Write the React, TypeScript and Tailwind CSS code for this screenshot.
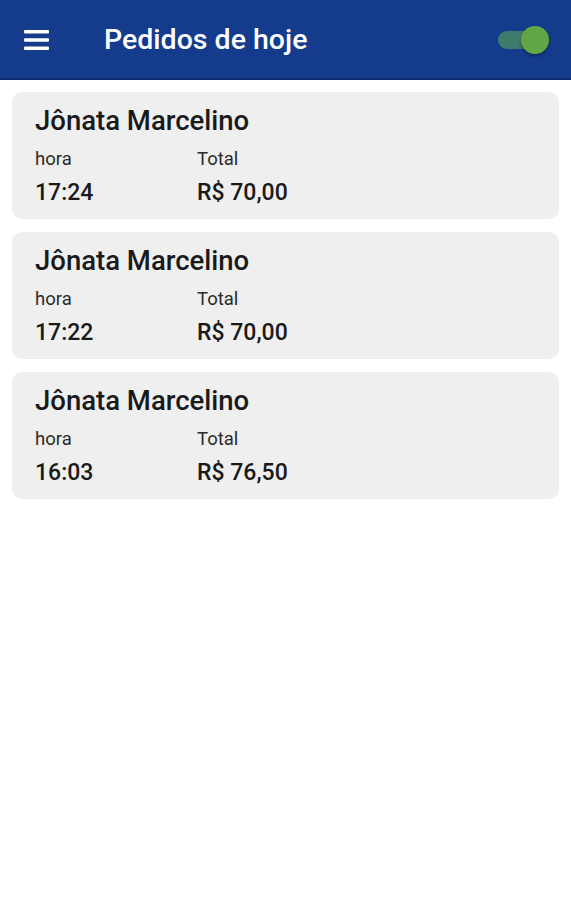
const orders = [
  { name: 'Jônata Marcelino', hora: '17:24', total: 'R$ 70,00' },
  { name: 'Jônata Marcelino', hora: '17:22', total: 'R$ 70,00' },
  { name: 'Jônata Marcelino', hora: '16:03', total: 'R$ 76,50' },
]

function OrderCard({ name, hora, total }: { name: string; hora: string; total: string }) {
  return (
    <div className="h-[127px] rounded-[10px] bg-[#efefef] pl-[23px] pt-[13px] text-[#1a1a1a]">
      <div className="text-[27.5px] font-medium leading-[32px]">{name}</div>
      <div className="mt-[10px] flex">
        <div className="w-[162px]">
          <div className="text-[18.5px] leading-[24px] text-[#2a2a2a]">hora</div>
          <div className="mt-[8px] text-[23px] font-medium leading-[28px]">{hora}</div>
        </div>
        <div>
          <div className="text-[18.5px] leading-[24px] text-[#2a2a2a]">Total</div>
          <div className="mt-[8px] text-[23px] font-medium leading-[28px]">{total}</div>
        </div>
      </div>
    </div>
  )
}

export default function App() {
  return (
    <div className="min-h-[900px] w-[571px] bg-white font-['Roboto',sans-serif]">
      <header className="flex h-[80px] items-center border-b-2 border-[#0d2c78] bg-[#153b8d] pl-[24px] pr-[33px] pt-[2px]">
        <svg width="25" height="22" viewBox="0 0 25 22" className="shrink-0">
          <rect x="0" y="1" width="25" height="3.5" rx="1" fill="white" />
          <rect x="0" y="9.3" width="25" height="3.5" rx="1" fill="white" />
          <rect x="0" y="17.5" width="25" height="3.5" rx="1" fill="white" />
        </svg>
        <h1 className="ml-[55px] text-[28.5px] font-medium text-white">Pedidos de hoje</h1>
        <div className="relative ml-auto h-[18px] w-[40px] rounded-full bg-[#3f7b6c]">
          <div className="absolute right-[-11px] top-[-5px] h-[28px] w-[28px] rounded-full bg-[#63a646] shadow-[0_2px_3px_rgba(0,0,0,0.35)]" />
        </div>
      </header>
      <main className="flex flex-col gap-[13px] px-[12px] pt-[12px]">
        {orders.map((o, i) => (
          <OrderCard key={i} {...o} />
        ))}
      </main>
    </div>
  )
}
